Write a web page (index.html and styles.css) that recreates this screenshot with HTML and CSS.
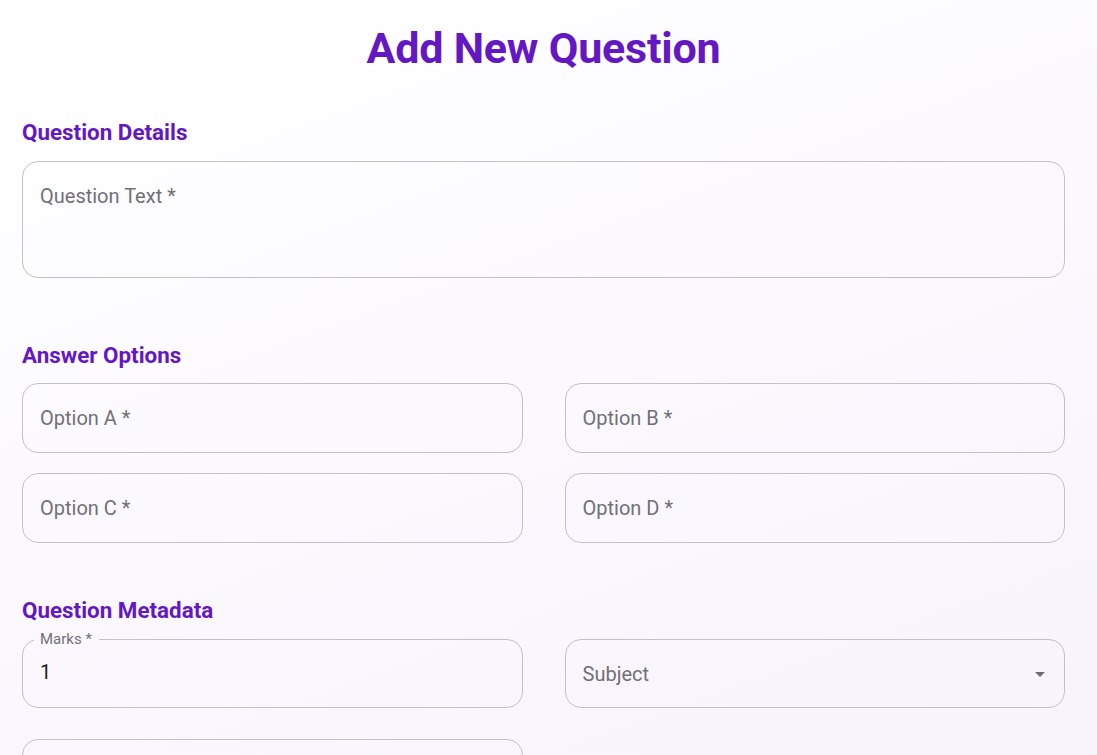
FILE: index.html
```html
<!DOCTYPE html>
<html lang="en">
<head>
<meta charset="utf-8">
<title>Add New Question</title>
<link rel="stylesheet" href="styles.css">
</head>
<body>
<main class="page">
  <h1 class="title">Add New Question</h1>

  <section class="section section-details">
    <h2 class="section-title">Question Details</h2>
    <div class="field field-multiline">
      <span class="placeholder">Question Text *</span>
    </div>
  </section>

  <section class="section section-options">
    <h2 class="section-title">Answer Options</h2>
    <div class="grid grid-options">
      <div class="field"><span class="placeholder">Option A *</span></div>
      <div class="field"><span class="placeholder">Option B *</span></div>
      <div class="field"><span class="placeholder">Option C *</span></div>
      <div class="field"><span class="placeholder">Option D *</span></div>
    </div>
  </section>

  <section class="section section-meta">
    <h2 class="section-title section-title-meta">Question Metadata</h2>
    <div class="grid grid-meta">
      <fieldset class="field-notched">
        <legend class="notch-label">Marks *</legend>
        <span class="value">1</span>
      </fieldset>
      <div class="field field-select">
        <span class="placeholder">Subject</span>
        <svg class="arrow" width="24" height="24" viewBox="0 0 24 24"><path d="M7 10l5 5 5-5z"/></svg>
      </div>
      <div class="field"></div>
    </div>
  </section>
</main>
</body>
</html>
```

FILE: styles.css
```css
* { box-sizing: border-box; }

html, body {
  margin: 0;
  padding: 0;
  height: 100%;
}

body {
  font-family: Roboto, "Liberation Sans", Arial, sans-serif;
  background: linear-gradient(160deg, #ffffff 0%, #fbf9fe 50%, #f7f4fc 100%);
  background-attachment: fixed;
  overflow: hidden;
}

.page {
  width: 1043px;
  margin-left: 22px;
  padding-top: 24px;
}

.title {
  margin: 0;
  text-align: center;
  font-size: 43px;
  line-height: 48px;
  font-weight: 700;
  color: #6318c4;
  letter-spacing: -0.2px;
}

.section-title {
  margin: 0 0 16px 0;
  font-size: 22.4px;
  line-height: 24px;
  font-weight: 700;
  color: #6318c4;
}

.section-title-meta { margin-bottom: 17px; }

.section-details { margin-top: 48px; }
.section-details .section-title { margin-bottom: 17px; }
.section-options { margin-top: 65px; }
.section-meta { margin-top: 55px; }

.field {
  height: 70px;
  border: 1px solid #c3c0c8;
  border-radius: 16px;
  display: flex;
  align-items: center;
  padding: 0 17px;
  background: transparent;
}

.field-multiline {
  height: 117px;
  align-items: flex-start;
  padding-top: 22px;
}

.placeholder {
  font-size: 20px;
  line-height: 24px;
  color: #717075;
}

.grid {
  display: grid;
  grid-template-columns: 1fr 1fr;
  column-gap: 42px;
}

.grid-options { row-gap: 20px; }
.grid-meta { row-gap: 31px; align-items: start; }
.grid-meta .field { height: 69px; }

.field-notched {
  margin: -8px 0 0 0;
  height: 77px;
  border: 1px solid #c3c0c8;
  border-radius: 16px;
  padding: 0 17px 0 17px;
  min-width: 0;
}

.notch-label {
  font-size: 15px;
  line-height: 16px;
  color: #717075;
  padding: 0 7px 0 6px;
  margin-left: -6px;
}

.value {
  display: block;
  margin-top: 13px;
  font-size: 20px;
  line-height: 24px;
  color: #1f1d22;
}

.field-select {
  justify-content: space-between;
  padding-right: 12px;
}

.arrow path { fill: #6e6c72; }
```
